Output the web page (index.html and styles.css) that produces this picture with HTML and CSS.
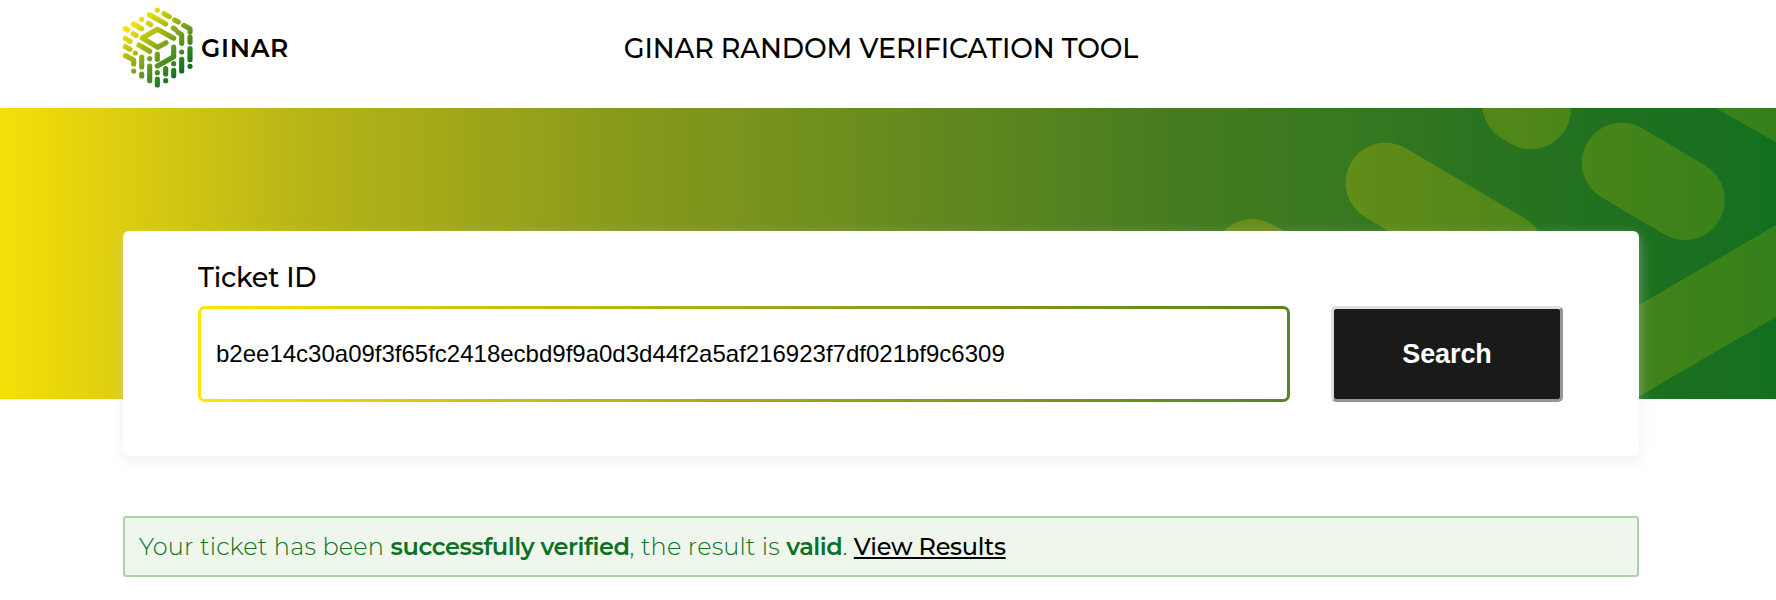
FILE: index.html
```html
<!DOCTYPE html>
<html lang="en">
<head>
<meta charset="utf-8">
<title>GINAR Random Verification Tool</title>
<link rel="stylesheet" href="styles.css">
</head>
<body>
<header class="header">
  <a class="logo">
    <svg class="logo-mark" viewBox="0 0 240 264" aria-hidden="true">
      <defs>
        <linearGradient id="mark" gradientUnits="userSpaceOnUse" x1="45" y1="50" x2="190" y2="210">
          <stop offset="0" stop-color="#ffe600"/><stop offset=".5" stop-color="#86a81b"/><stop offset="1" stop-color="#08701f"/>
        </linearGradient>
      </defs>
      <g fill="none" stroke="url(#mark)" stroke-width="15.5" stroke-linecap="round" stroke-linejoin="round">
        <path d="M118 18h.01M138 29l16 9M170 48l11 6M197 64l19 10v10M216 99v16M216 134v33M216 187h.01"/>
        <path d="M94 32l49 28M166 72l6 4M180 85l11 7v26M191 144h.01M191 166v35"/>
        <path d="M71 46h.01M91 58l7 4M144 116l-25 14-46-28 45-26 49 27M167 129v29l-49 28"/>
        <path d="M46 60l25 14M22 74l7 4M46 89l8 5M22 103h.01M33 110l3 2M63 123l32 19M22 128l14 8M52 147h.01"/>
        <path d="M22 155l25 13v12M47 201h.01M71 159v30M71 210v6M95 164h.01M95 186v44M118 150v16M118 206h.01M118 225v18M143 194v16M143 230h.01M167 179h.01M167 199v16"/>
      </g>
    </svg>
    <span class="logo-name">GINAR</span>
  </a>
  <h1 class="title">GINAR RANDOM VERIFICATION TOOL</h1>
</header>
<section class="hero">
  <svg class="hero-art" viewBox="1176 108 600 291" aria-hidden="true">
    <defs>
      <linearGradient id="art" gradientUnits="userSpaceOnUse" x1="1345" y1="0" x2="1776" y2="0">
        <stop offset="0" stop-color="#beb90a"/><stop offset="1" stop-color="#7da510"/>
      </linearGradient>
    </defs>
    <g opacity=".32" fill="none" stroke="url(#art)" stroke-width="80" stroke-linecap="round">
      <path d="M1385.5 182.7L1505 253"/>
      <path d="M1522.2 104L1531 109.3"/>
      <path d="M1621.7 162.7L1684.8 200"/>
      <path d="M1252.5 259l70 41"/>
      <path fill="url(#art)" stroke="none" d="M1715.6 108H1776V142.3zM1630 310.3L1776 225v91.7L1630 401.5z"/>
    </g>
  </svg>
</section>
<main class="main">
  <form class="card">
    <div class="field">
      <label class="label" for="ticket">Ticket ID</label>
      <input class="input" id="ticket" type="text" value="b2ee14c30a09f3f65fc2418ecbd9f9a0d3d44f2a5af216923f7df021bf9c6309">
    </div>
    <button class="search" type="button">Search</button>
  </form>
  <p class="alert">Your ticket has been <strong>successfully verified</strong>, the result is <strong>valid</strong>. <a class="results">View Results</a></p>
</main>
</body>
</html>
```
FILE: styles.css
```css
* { box-sizing: border-box; }
body {
  margin: 0;
  height: 600px;
  overflow: hidden;
  background: #fff;
  color: #000;
  font-family: Montserrat, Inter, sans-serif;
}
.header {
  display: grid;
  grid-template-columns: 1fr auto 1fr;
  height: 108px;
  padding: 4px 137px 0 123px;
}
.logo { display: flex; margin-left: -5px; }
.logo-mark { width: 80px; height: 88px; }
.logo-name {
  margin: 29px 0 0 3px;
  font-size: 25px;
  line-height: 30px;
  font-weight: 600;
  letter-spacing: .7px;
}
.title {
  margin: 28px 0 0;
  font-size: 27px;
  line-height: 34px;
  font-weight: 500;
  letter-spacing: -.13px;
  white-space: nowrap;
}
.hero {
  display: flex;
  justify-content: flex-end;
  height: 291px;
  background: linear-gradient(90deg, #f5e008 0%, #dccd10 7%, #b8b517 17%, #8a9b1b 34%, #467c20 66%, #20711f 90%, #136f20 100%);
}
.hero-art { width: 600px; height: 291px; }
.main { position: relative; margin: -168px 137px 0 123px; }
.card {
  display: flex;
  align-items: flex-end;
  gap: 41px;
  height: 225px;
  padding: 0 76px 54px 75px;
  border-radius: 6px;
  background: #fff;
  box-shadow: 0 5px 14px rgba(220, 220, 220, .45);
}
.field { flex: 1; }
.label {
  display: block;
  margin-bottom: 10px;
  font-size: 27px;
  line-height: 36px;
  font-weight: 500;
  letter-spacing: -.2px;
}
.input {
  display: block;
  width: 100%;
  height: 96px;
  padding: 0 15px;
  border: 3px solid transparent;
  border-radius: 7px;
  background: linear-gradient(#fff, #fff) padding-box, linear-gradient(90deg, #ffe600, #ccc412 25%, #9ca41a 55%, #57851f) border-box;
  font: 24px "Liberation Sans", Arial, sans-serif;
  color: #000;
}
.search {
  width: 232px;
  height: 96px;
  border: 3px solid;
  border-color: #dfdfdf #969495 #969495 #dfdfdf;
  border-radius: 5px;
  background: #1a1a1a;
  color: #fff;
  font: bold 27px "Liberation Sans", Arial, sans-serif;
  letter-spacing: -.1px;
}
.alert {
  height: 61px;
  margin: 60px 0 0;
  padding: 12px 14px;
  border: 2px solid #b1cfab;
  border-radius: 3px;
  background: #eff6ec;
  color: #0b7125;
  font-size: 24px;
  line-height: 34px;
  font-weight: 300;
  letter-spacing: .19px;
}
.alert strong { font-weight: 600; letter-spacing: -.43px; }
.results {
  color: #000;
  font-weight: 500;
  letter-spacing: -.25px;
  text-decoration: underline;
  text-decoration-thickness: 2px;
  text-underline-offset: 2px;
  text-decoration-skip-ink: none;
}
```
